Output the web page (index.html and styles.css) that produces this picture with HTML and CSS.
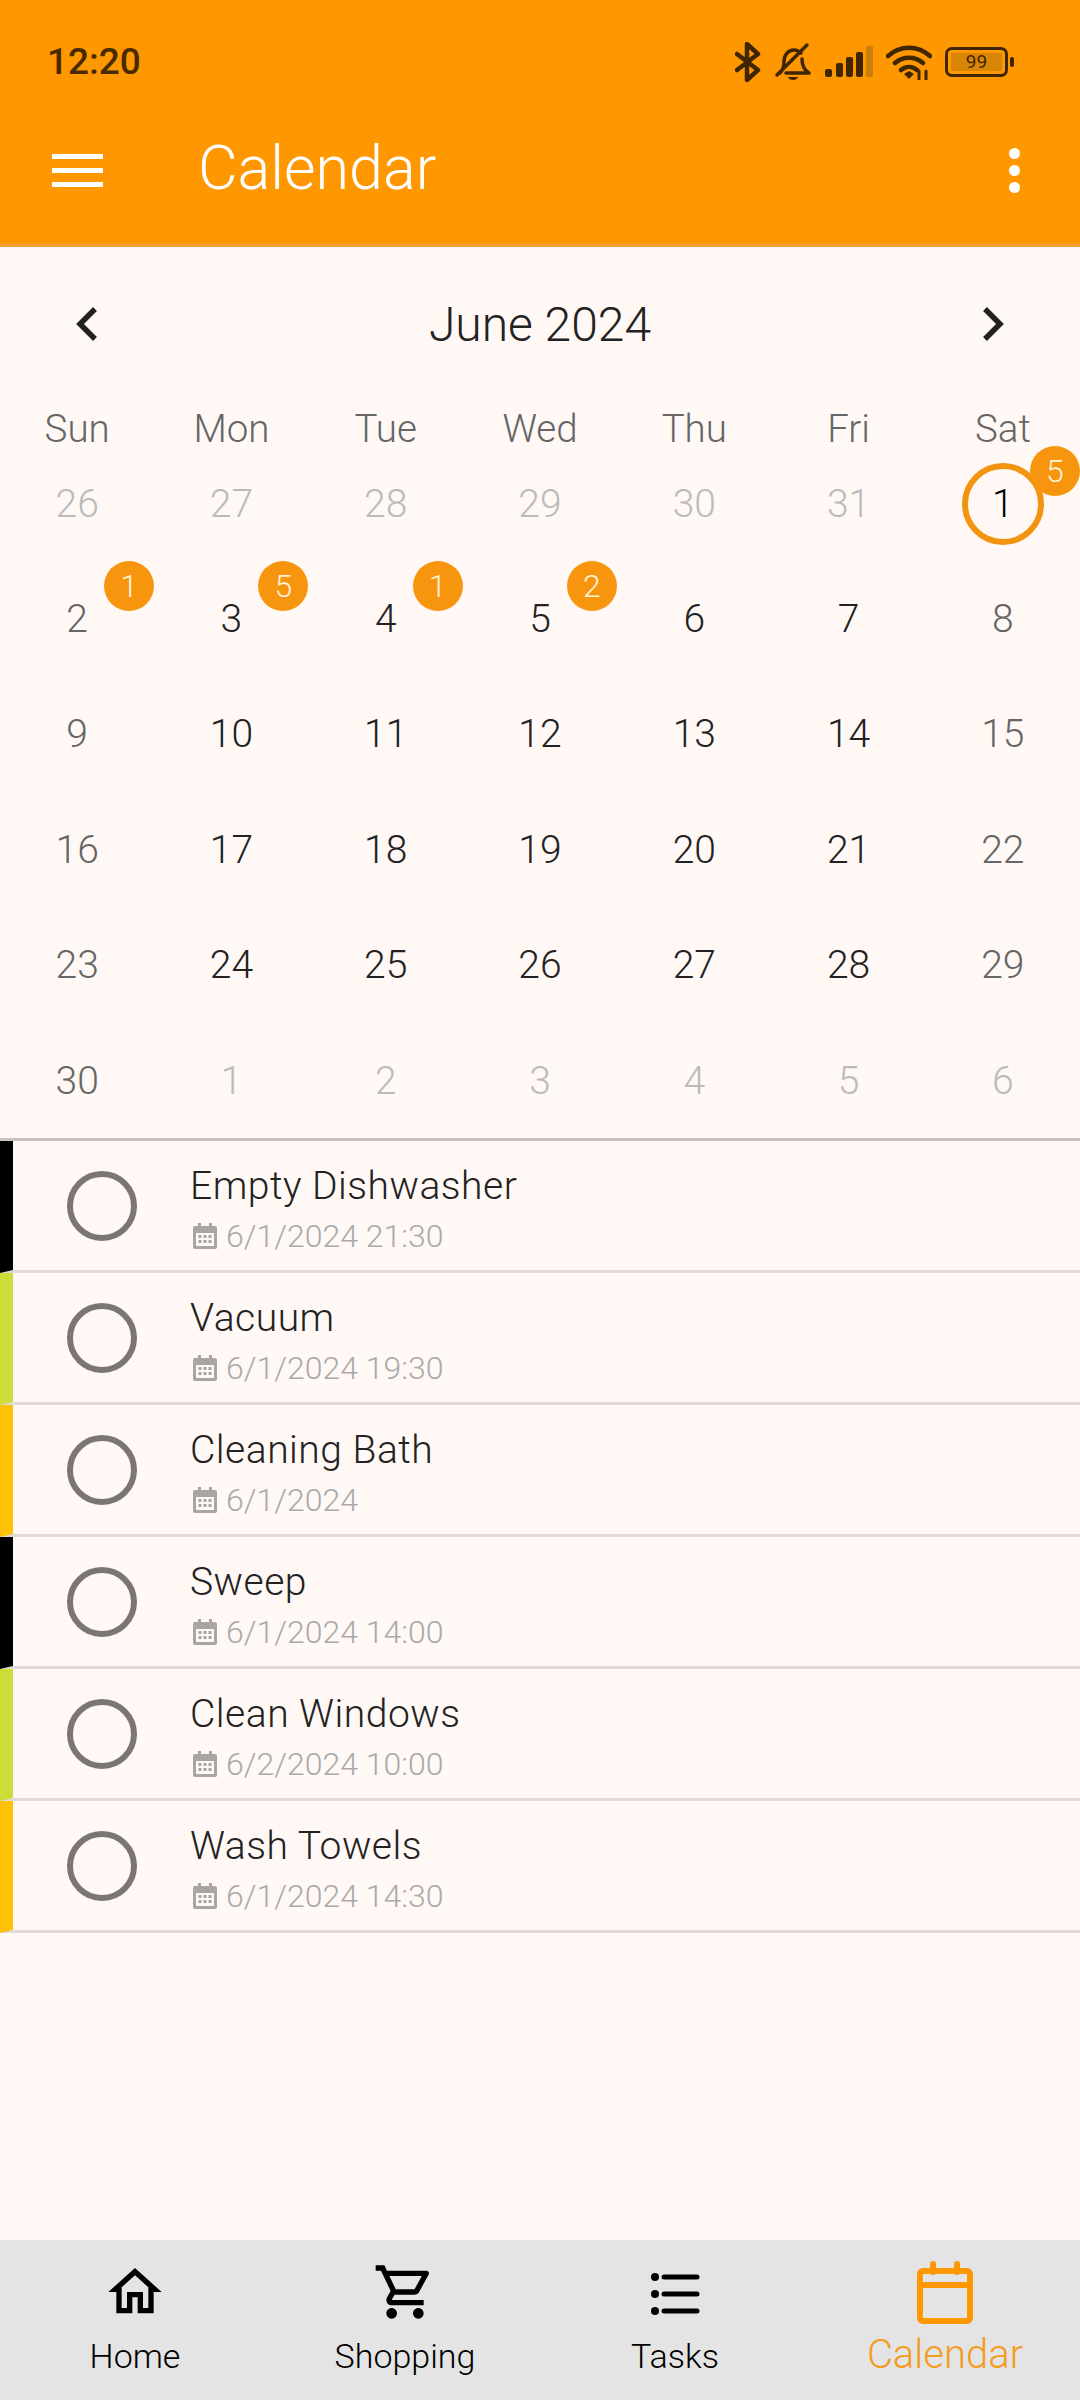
FILE: index.html
```html
<!DOCTYPE html>
<html lang="en">
    <head>
        <meta charset="UTF-8">
        <meta name="viewport" content="width=device-width, initial-scale=1.0">
        <title>Calendar</title>
        <link rel="stylesheet" href="styles.css">
    </head>
    <body>
        <svg class="defs" width="0" height="0">
            <symbol id="date-icon" viewBox="0 0 24 26">
                <path fill="#a8a5a3" fill-rule="evenodd" d="M5 0h3v3h8V0h3v3h3a2 2 0 0 1 2 2v19a2 2 0 0 1-2 2H2a2 2 0 0 1-2-2V5a2 2 0 0 1 2-2h3zM3 10v13h18V10zM5.500 12h3v3h-3zm5 0h3v3h-3zm5 0h3v3h-3zm-10 5h3v3h-3zm5 0h3v3h-3zm5 0h3v3h-3z"/>
            </symbol>
        </svg>
        <div class="page">
            <header class="app-header">
                <div class="status-bar">
                    <span class="clock">12:20</span>
                    <div class="status-icons">
                        <svg width="26" height="40" viewBox="0 0 26 40" fill="none" stroke="#3f2500" stroke-width="4.500" stroke-linecap="round" stroke-linejoin="round">
                            <path d="M2 12l21 16-11 10V2l11 10L2 28"/>
                        </svg>
                        <svg width="38" height="40" viewBox="0 0 36 40" fill="none" stroke="#3f2500" stroke-width="3.500" stroke-linecap="round" stroke-linejoin="round">
                            <path d="M5 31c3-3 4-6 4-11 0-7 4-12 10-12 2 0 5 1 7 3M27 17c0 7 2 11 7 14H11M32 3L2 33"/>
                            <path d="M13 35h10c-1 4-9 4-10 0z" fill="#3f2500" stroke="none"/>
                        </svg>
                        <svg width="48" height="32" viewBox="0 0 48 32">
                            <rect x="0" y="23" width="7" height="8" rx="2" fill="#3f2500"/>
                            <rect x="11" y="17" width="7" height="14" rx="2" fill="#3f2500"/>
                            <rect x="21" y="11" width="7" height="20" rx="2" fill="#3f2500"/>
                            <rect x="31" y="6" width="7" height="25" rx="2" fill="#3f2500"/>
                            <rect x="41" y="0" width="7" height="31" rx="1" fill="#cc7e08"/>
                        </svg>
                        <svg width="46" height="36" viewBox="0 0 46 36" fill="none" stroke="#3f2500" stroke-width="4.500" stroke-linecap="round">
                            <path d="M2 12c12-11 30-11 42 0M9 19c8-7 20-7 28 0M15 26c5-4 11-4 16 0"/>
                            <path d="M18 30l5-3 5 3-5 5z" fill="#3f2500" stroke="none"/>
                            <path d="M33 27v8M40 27v8" stroke-width="3"/>
                        </svg>
                        <div class="battery">
                            <div class="battery-body"><span class="battery-level">99</span></div>
                            <div class="battery-tip"></div>
                        </div>
                    </div>
                </div>
                <div class="app-bar">
                    <div class="burger"><span></span><span></span><span></span></div>
                    <h1 class="app-title">Calendar</h1>
                    <div class="more"><span></span><span></span><span></span></div>
                </div>
            </header>

            <section class="calendar">
                <div class="month-nav">
                    <svg width="24" height="36" viewBox="0 0 24 36" fill="none" stroke="#222" stroke-width="5.500"><path d="M20 3L5 18l15 15"/></svg>
                    <span class="month-name">June 2024</span>
                    <svg width="24" height="36" viewBox="0 0 24 36" fill="none" stroke="#222" stroke-width="5.500"><path d="M4 3l15 15L4 33"/></svg>
                </div>
                <div class="weekdays">
                    <span>Sun</span><span>Mon</span><span>Tue</span><span>Wed</span><span>Thu</span><span>Fri</span><span>Sat</span>
                </div>
                <div class="days">
                    <div class="day muted">26</div>
                    <div class="day muted">27</div>
                    <div class="day muted">28</div>
                    <div class="day muted">29</div>
                    <div class="day muted">30</div>
                    <div class="day muted">31</div>
                    <div class="day today"><span class="ring">1</span><span class="badge">5</span></div>

                    <div class="day weekend">2<span class="badge">1</span></div>
                    <div class="day">3<span class="badge">5</span></div>
                    <div class="day">4<span class="badge">1</span></div>
                    <div class="day">5<span class="badge">2</span></div>
                    <div class="day">6</div>
                    <div class="day">7</div>
                    <div class="day weekend">8</div>

                    <div class="day weekend">9</div>
                    <div class="day">10</div>
                    <div class="day">11</div>
                    <div class="day">12</div>
                    <div class="day">13</div>
                    <div class="day">14</div>
                    <div class="day weekend">15</div>

                    <div class="day weekend">16</div>
                    <div class="day">17</div>
                    <div class="day">18</div>
                    <div class="day">19</div>
                    <div class="day">20</div>
                    <div class="day">21</div>
                    <div class="day weekend">22</div>

                    <div class="day weekend">23</div>
                    <div class="day">24</div>
                    <div class="day">25</div>
                    <div class="day">26</div>
                    <div class="day">27</div>
                    <div class="day">28</div>
                    <div class="day weekend">29</div>

                    <div class="day weekend">30</div>
                    <div class="day muted">1</div>
                    <div class="day muted">2</div>
                    <div class="day muted">3</div>
                    <div class="day muted">4</div>
                    <div class="day muted">5</div>
                    <div class="day muted">6</div>
                </div>
            </section>

            <section class="tasks">
                <div class="task black">
                    <div class="check"></div>
                    <div class="task-text">
                        <div class="task-title">Empty Dishwasher</div>
                        <div class="task-date"><svg width="24" height="26"><use href="#date-icon"/></svg>6/1/2024 21:30</div>
                    </div>
                </div>
                <div class="task lime">
                    <div class="check"></div>
                    <div class="task-text">
                        <div class="task-title">Vacuum</div>
                        <div class="task-date"><svg width="24" height="26"><use href="#date-icon"/></svg>6/1/2024 19:30</div>
                    </div>
                </div>
                <div class="task amber">
                    <div class="check"></div>
                    <div class="task-text">
                        <div class="task-title">Cleaning Bath</div>
                        <div class="task-date"><svg width="24" height="26"><use href="#date-icon"/></svg>6/1/2024</div>
                    </div>
                </div>
                <div class="task black">
                    <div class="check"></div>
                    <div class="task-text">
                        <div class="task-title">Sweep</div>
                        <div class="task-date"><svg width="24" height="26"><use href="#date-icon"/></svg>6/1/2024 14:00</div>
                    </div>
                </div>
                <div class="task lime">
                    <div class="check"></div>
                    <div class="task-text">
                        <div class="task-title">Clean Windows</div>
                        <div class="task-date"><svg width="24" height="26"><use href="#date-icon"/></svg>6/2/2024 10:00</div>
                    </div>
                </div>
                <div class="task amber">
                    <div class="check"></div>
                    <div class="task-text">
                        <div class="task-title">Wash Towels</div>
                        <div class="task-date"><svg width="24" height="26"><use href="#date-icon"/></svg>6/1/2024 14:30</div>
                    </div>
                </div>
            </section>

            <nav class="bottom-nav">
                <div class="nav-item">
                    <svg width="64" height="64" viewBox="0 0 24 24"><path fill="#000" d="M12 3L2 12h3v8h6v-6h2v6h6v-8h3L12 3zm5 15h-2v-6H9v6H7v-7.810l5-4.500 5 4.500V18z"/></svg>
                    <span>Home</span>
                </div>
                <div class="nav-item">
                    <svg width="64" height="64" viewBox="0 0 24 24"><path fill="#000" d="M15.550 13c.75 0 1.410-.41 1.750-1.030l3.580-6.490c.37-.66-.11-1.480-.87-1.480H5.210l-.94-2H1v2h2l3.600 7.590-1.350 2.440C4.520 15.370 5.480 17 7 17h12v-2H7l1.100-2h7.450zM6.160 6h12.150l-2.760 5H8.530L6.160 6zM7 18c-1.100 0-1.990.9-1.990 2S5.900 22 7 22s2-.9 2-2-.9-2-2-2zm10 0c-1.100 0-1.990.9-1.990 2s.89 2 1.990 2 2-.9 2-2-.9-2-2-2z"/></svg>
                    <span>Shopping</span>
                </div>
                <div class="nav-item">
                    <svg width="64" height="64" viewBox="0 0 64 64" fill="none" stroke="#000" stroke-width="5" stroke-linecap="round">
                        <path d="M21 17h33M21 34h33M21 51h33"/>
                        <circle cx="12" cy="17" r="4" fill="#000" stroke="none"/>
                        <circle cx="12" cy="34" r="4" fill="#000" stroke="none"/>
                        <circle cx="12" cy="51" r="4" fill="#000" stroke="none"/>
                    </svg>
                    <span>Tasks</span>
                </div>
                <div class="nav-item active">
                    <svg width="64" height="64" viewBox="0 0 64 64" fill="none" stroke="#ff9800" stroke-width="6" stroke-linejoin="round">
                        <rect x="7" y="11" width="50" height="50" rx="3"/>
                        <path d="M7 25h50"/>
                        <path d="M20 4v8M44 4v8" stroke-linecap="round"/>
                    </svg>
                    <span>Calendar</span>
                </div>
            </nav>
        </div>
    </body>
</html>
```

FILE: styles.css
```css
* {
    box-sizing: border-box;
}

body {
    margin: 0;
    font-family: Roboto, "Noto Sans", sans-serif;
    font-weight: 300;
    background-color: #fff8f5;
    color: #222;
}

.defs {
    position: absolute;
}

.page {
    display: flex;
    flex-direction: column;
    height: 2400px;
}

/* orange header */
.app-header {
    height: 247px;
    background-color: #ff9800;
    border-bottom: 3px solid #eda033;
}

.status-bar {
    display: flex;
    justify-content: space-between;
    align-items: center;
    height: 123px;
    padding: 0 66px 0 47px;
}

.clock {
    font-size: 37px;
    font-weight: 500;
    color: #4a2a00;
}

.status-icons {
    display: flex;
    align-items: center;
    gap: 13px;
}

.battery {
    display: flex;
    align-items: center;
    gap: 2px;
}

.battery-body {
    width: 63px;
    height: 30px;
    padding: 3px;
    border: 3px solid #3f2500;
    border-radius: 7px;
}

.battery-level {
    display: block;
    height: 100%;
    background-color: #d98606;
    color: #3f2500;
    font-size: 19px;
    font-weight: 400;
    line-height: 18px;
    text-align: center;
}

.battery-tip {
    width: 4px;
    height: 10px;
    background-color: #3f2500;
    border-radius: 2px;
}

.app-bar {
    display: flex;
    align-items: center;
    height: 94px;
    padding: 0 60px 0 52px;
}

.burger {
    display: flex;
    flex-direction: column;
    gap: 9px;
    width: 51px;
}

.burger span {
    height: 5px;
    background-color: #fff;
}

.app-title {
    flex: 1;
    margin: 0 0 4px 95px;
    font-size: 61px;
    font-weight: 300;
    color: #fff;
}

.more {
    display: flex;
    flex-direction: column;
    gap: 6px;
}

.more span {
    width: 11px;
    height: 11px;
    background-color: #fff;
    border-radius: 50%;
}

/* month grid */
.month-nav {
    display: flex;
    justify-content: space-between;
    align-items: center;
    height: 153px;
    padding: 0 75px 0 75px;
}

.month-name {
    padding-top: 2px;
    font-size: 48px;
}

.weekdays,
.days {
    display: grid;
    grid-template-columns: repeat(7, 1fr);
    text-align: center;
}

.weekdays {
    padding-top: 12px;
    height: 46px;
    font-size: 38.500px;
    line-height: 34px;
    color: #666;
}

.days {
    grid-auto-rows: 115.400px;
    font-size: 39px;
}

.day {
    position: relative;
    display: flex;
    justify-content: center;
    align-items: center;
    font-weight: 300;
}

.muted {
    color: #bbb;
}

.weekend {
    color: #666;
}

.today {
    color: #000;
}

.ring {
    display: flex;
    justify-content: center;
    align-items: center;
    width: 82px;
    height: 82px;
    border: 6px solid #f39410;
    border-radius: 50%;
}

.badge {
    position: absolute;
    left: 50%;
    top: 50%;
    display: flex;
    justify-content: center;
    align-items: center;
    width: 50px;
    height: 50px;
    margin: -58px 0 0 27px;
    background-color: #f7950f;
    border-radius: 50%;
    color: #fff3d8;
    font-size: 32px;
}

/* task list */
.tasks {
    flex: 1;
    border-top: 3px solid #c8c2c0;
}

.task {
    display: flex;
    align-items: center;
    height: 132px;
    border-left: 13px solid #000;
    border-bottom: 3px solid #e0dad8;
}

.black {
    border-left-color: #000;
}

.lime {
    border-left-color: #cddc39;
}

.amber {
    border-left-color: #ffc107;
}

.check {
    width: 70px;
    height: 70px;
    margin-left: 54px;
    border: 6px solid #7b7674;
    border-radius: 50%;
}

.task-text {
    margin-left: 53px;
    padding-top: 6px;
}

.task-title {
    font-size: 39px;
    line-height: 48px;
    letter-spacing: 0.5px;
}

.task-date {
    display: flex;
    align-items: center;
    gap: 9px;
    margin-top: 7px;
    padding-left: 3px;
    font-size: 32px;
    line-height: 38px;
    color: #aaa;
}

/* bottom tabs */
.bottom-nav {
    display: grid;
    grid-template-columns: repeat(4, 1fr);
    height: 160px;
    background-color: #e4e4e4;
}

.nav-item {
    display: flex;
    flex-direction: column;
    align-items: center;
    padding-top: 20px;
    font-size: 34px;
    color: #000;
}

.nav-item span {
    line-height: 40px;
    margin-top: 12px;
}

.active {
    font-size: 40px;
    color: #f39c1f;
}

.active span {
    margin-top: 11px;
}
```
